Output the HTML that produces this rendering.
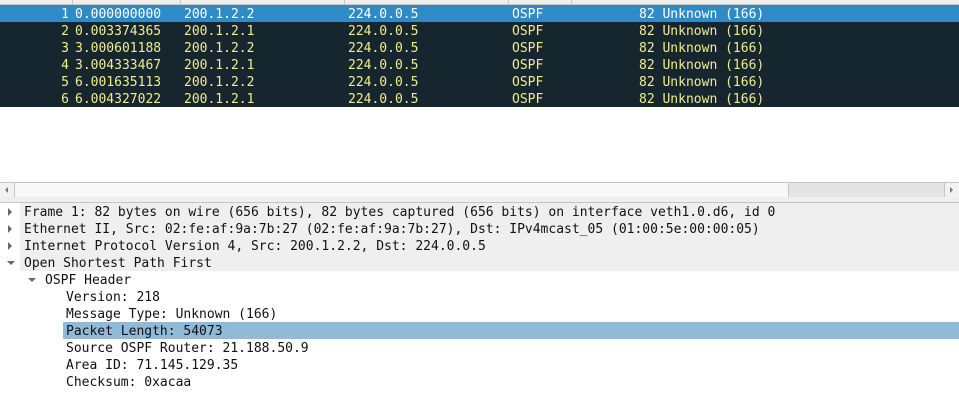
<html><head><style>
body{margin:0;width:959px;height:410px;overflow:hidden;background:#fff;font-family:"DejaVu Sans Mono","Liberation Mono",monospace;font-size:13px;position:relative}
.a{position:absolute;white-space:pre}
.r{position:absolute;left:0;width:959px;height:17px;background:#16262f;color:#f1ec8e}
.r.s{background:#2f8bc6;color:#fff}
.r span{position:absolute;top:1px;line-height:17px;white-space:pre}
.d{position:absolute;left:0;width:959px;height:17px;line-height:19px;white-space:pre;color:#111}
.g{background:#efefef;left:20px;width:939px}
.tri{position:absolute;width:0;height:0}
</style></head><body>
<div class="a" style="left:0;top:0;width:959px;height:4px;background:#efefef;border-bottom:1px solid #c8c8c8"></div>
<div class="a" style="left:72px;top:0;width:1px;height:4px;background:#c8c8c8"></div>
<div class="a" style="left:180px;top:0;width:1px;height:4px;background:#c8c8c8"></div>
<div class="a" style="left:344px;top:0;width:1px;height:4px;background:#c8c8c8"></div>
<div class="a" style="left:508px;top:0;width:1px;height:4px;background:#c8c8c8"></div>
<div class="a" style="left:571px;top:0;width:1px;height:4px;background:#c8c8c8"></div>

<div class="r s" style="top:5px"><span style="right:890px">1</span><span style="left:75px">0.000000000</span><span style="left:184px">200.1.2.2</span><span style="left:348px">224.0.0.5</span><span style="left:512px">OSPF</span><span style="left:639px">82 Unknown (166)</span></div>
<div class="r" style="top:22px"><span style="right:890px">2</span><span style="left:75px">0.003374365</span><span style="left:184px">200.1.2.1</span><span style="left:348px">224.0.0.5</span><span style="left:512px">OSPF</span><span style="left:639px">82 Unknown (166)</span></div>
<div class="r" style="top:39px"><span style="right:890px">3</span><span style="left:75px">3.000601188</span><span style="left:184px">200.1.2.2</span><span style="left:348px">224.0.0.5</span><span style="left:512px">OSPF</span><span style="left:639px">82 Unknown (166)</span></div>
<div class="r" style="top:56px"><span style="right:890px">4</span><span style="left:75px">3.004333467</span><span style="left:184px">200.1.2.1</span><span style="left:348px">224.0.0.5</span><span style="left:512px">OSPF</span><span style="left:639px">82 Unknown (166)</span></div>
<div class="r" style="top:73px"><span style="right:890px">5</span><span style="left:75px">6.001635113</span><span style="left:184px">200.1.2.2</span><span style="left:348px">224.0.0.5</span><span style="left:512px">OSPF</span><span style="left:639px">82 Unknown (166)</span></div>
<div class="r" style="top:90px"><span style="right:890px">6</span><span style="left:75px">6.004327022</span><span style="left:184px">200.1.2.1</span><span style="left:348px">224.0.0.5</span><span style="left:512px">OSPF</span><span style="left:639px">82 Unknown (166)</span></div>

<div class="a" style="left:0;top:182px;width:959px;height:14px;background:#e4e4e4;border-top:1px solid #c4c4c4;border-bottom:1px solid #c4c4c4"></div>
<div class="a" style="left:0;top:183px;width:14px;height:14px;background:#f2f2f2;border-right:1px solid #c4c4c4"></div>
<div class="a" style="left:15px;top:183px;width:773px;height:14px;background:#f8f8f8;border-right:1px solid #c4c4c4"></div>
<div class="a" style="left:944px;top:183px;width:15px;height:14px;background:#f2f2f2;border-left:1px solid #c4c4c4"></div>
<div class="tri" style="left:5px;top:187px;border-top:3px solid transparent;border-bottom:3px solid transparent;border-right:3px solid #777"></div>
<div class="tri" style="left:950px;top:187px;border-top:3px solid transparent;border-bottom:3px solid transparent;border-left:3px solid #777"></div>
<div class="a" style="left:0;top:197px;width:959px;height:5px;background:#efefef"></div>
<div class="a" style="left:0;top:202px;width:959px;height:1px;background:#c4c4c4"></div>

<div class="d g" style="top:203px"></div>
<div class="d g" style="top:220px"></div>
<div class="d g" style="top:237px"></div>
<div class="d g" style="top:254px"></div>
<div class="d" style="top:203px;left:24px">Frame 1: 82 bytes on wire (656 bits), 82 bytes captured (656 bits) on interface veth1.0.d6, id 0</div>
<div class="d" style="top:220px;left:24px">Ethernet II, Src: 02:fe:af:9a:7b:27 (02:fe:af:9a:7b:27), Dst: IPv4mcast_05 (01:00:5e:00:00:05)</div>
<div class="d" style="top:237px;left:24px">Internet Protocol Version 4, Src: 200.1.2.2, Dst: 224.0.0.5</div>
<div class="d" style="top:254px;left:24px">Open Shortest Path First</div>
<div class="tri" style="left:8px;top:208px;border-top:4px solid transparent;border-bottom:4px solid transparent;border-left:4px solid #666"></div>
<div class="tri" style="left:8px;top:225px;border-top:4px solid transparent;border-bottom:4px solid transparent;border-left:4px solid #666"></div>
<div class="tri" style="left:8px;top:242px;border-top:4px solid transparent;border-bottom:4px solid transparent;border-left:4px solid #666"></div>
<div class="tri" style="left:7px;top:261px;border-left:4px solid transparent;border-right:4px solid transparent;border-top:4px solid #666"></div>
<div class="d" style="top:271px;left:45px">OSPF Header</div>
<div class="tri" style="left:28px;top:278px;border-left:4px solid transparent;border-right:4px solid transparent;border-top:4px solid #666"></div>
<div class="d" style="top:288px;left:66px">Version: 218</div>
<div class="d" style="top:305px;left:66px">Message Type: Unknown (166)</div>
<div class="d" style="top:322px;left:63px;width:896px;background:#8fbbd9;padding-left:3px;box-sizing:border-box">Packet Length: 54073</div>
<div class="d" style="top:339px;left:66px">Source OSPF Router: 21.188.50.9</div>
<div class="d" style="top:356px;left:66px">Area ID: 71.145.129.35</div>
<div class="d" style="top:373px;left:66px">Checksum: 0xacaa</div>
</body></html>
